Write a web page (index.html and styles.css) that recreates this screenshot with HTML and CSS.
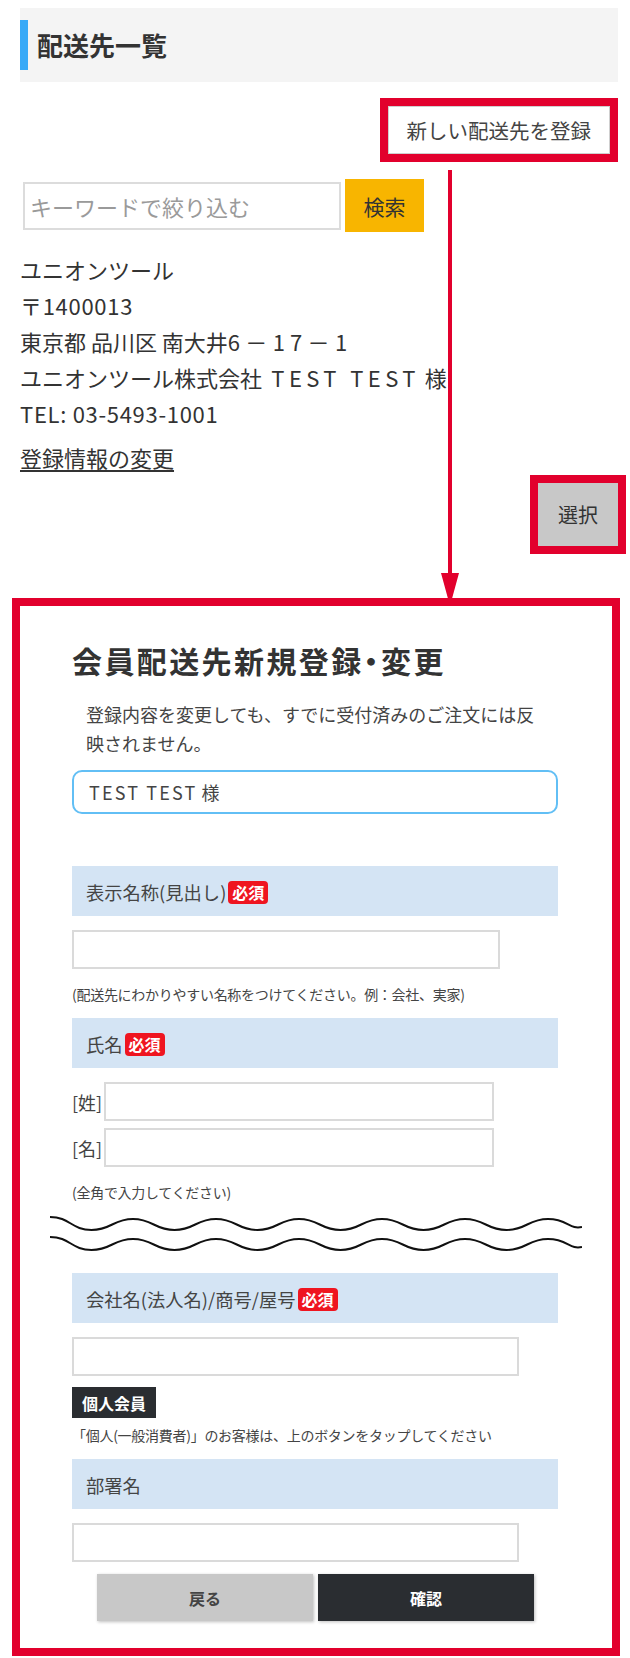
FILE: index.html
```html
<!DOCTYPE html>
<html lang="ja">
<head>
  <meta charset="UTF-8" />
  <meta name="viewport" content="width=device-width, initial-scale=1.0"/>
  <title>配送先一覧</title>
  <link rel="stylesheet" href="styles.css">
</head>
<body>
  <div class="page">
    <div class="page-head">
      <h1>配送先一覧</h1>
    </div>

    <div class="new-row">
      <div class="mark">
        <button class="new-btn">新しい配送先を登録</button>
      </div>
    </div>

    <form class="search">
      <input type="text" placeholder="キーワードで絞り込む">
      <button type="button">検索</button>
    </form>

    <div class="address">
      <p>ユニオンツール</p>
      <p class="digits">〒1400013</p>
      <p>東京都 品川区 南大井<span class="num">6－17－1</span></p>
      <p>ユニオンツール株式会社<span class="addr-latin"> TEST TEST</span> 様</p>
      <p class="digits">TEL: 03-5493-1001</p>
      <a href="#" class="edit-link">登録情報の変更</a>
    </div>

    <div class="select-row">
      <div class="mark">
        <button class="select-btn">選択</button>
      </div>
    </div>

    <!-- arrow from the new-address button down to the form -->
    <svg class="arrow" width="20" height="436" viewBox="0 0 20 436">
      <rect x="8" y="0" width="4" height="406" fill="#e2002d"/>
      <polygon points="1,403 19,403 10,436" fill="#e2002d"/>
    </svg>

    <div class="form-mark">
      <h2 class="form-title">会員配送先新規登録・変更</h2>
      <p class="lead">登録内容を変更しても、すでに受付済みのご注文には反映されません。</p>

      <div class="name-box"><span class="latin">TEST TEST</span> 様</div>

      <div class="field-head first">表示名称(見出し)<span class="req">必須</span></div>
      <input class="field w-md" type="text">
      <p class="note">(配送先にわかりやすい名称をつけてください。例：会社、実家)</p>

      <div class="field-head">氏名<span class="req">必須</span></div>
      <label class="name-row">[姓]<input class="field" type="text"></label>
      <label class="name-row">[名]<input class="field" type="text"></label>
      <p class="note">(全角で入力してください)</p>

      <svg class="cut" width="532" height="40" viewBox="0 0 532 40">
        <path d="M0 2 C20 2 21.5 15 41.5 15 S63 4 83 4 S104.5 15 124.5 15 S146 4 166 4 S187.5 15 207.5 15 S229 4 249 4 S270.5 15 290.5 15 S312 4 332 4 S353.5 15 373.5 15 S395 4 415 4 S436.5 15 456.5 15 S478 4 498 4 S519.5 15 532 12" fill="none" stroke="#111" stroke-width="2"/>
        <path d="M0 22 C20 22 21.5 35 41.5 35 S63 24 83 24 S104.5 35 124.5 35 S146 24 166 24 S187.5 35 207.5 35 S229 24 249 24 S270.5 35 290.5 35 S312 24 332 24 S353.5 35 373.5 35 S395 24 415 24 S436.5 35 456.5 35 S478 24 498 24 S519.5 35 532 32" fill="none" stroke="#111" stroke-width="2"/>
      </svg>

      <div class="field-head">会社名(法人名)/商号/屋号<span class="req">必須</span></div>
      <input class="field w-lg" type="text">
      <button type="button" class="personal-btn">個人会員</button>
      <p class="note small">「個人(一般消費者)」のお客様は、上のボタンをタップしてください</p>

      <div class="field-head">部署名</div>
      <input class="field w-lg" type="text">

      <div class="actions">
        <button type="button" class="btn-back">戻る</button>
        <button type="button" class="btn-confirm">確認</button>
      </div>
    </div>
  </div>
</body>
</html>
```

FILE: styles.css
```css
:root {
  --mark-red: #e2002d;
  --head-blue: #d4e4f4;
  --text-color: #333;
  --dark-btn: #2a2d31;
}

* {
  margin: 0;
  padding: 0;
  box-sizing: border-box;
}

body {
  font-family: "Noto Sans CJK JP", "Noto Sans", sans-serif;
  color: var(--text-color);
  background: #fff;
}

button, input {
  font-family: inherit;
}

.page {
  position: relative;
  width: 630px;
}

.page-head {
  margin: 8px 12px 0 20px;
  background: #f4f4f4;
  padding: 12px 0;
}

.page-head h1 {
  border-left: 8px solid #38a9f7;
  padding-left: 9px;
  font-size: 26px;
  line-height: 50px;
  font-weight: bold;
  color: #333;
}

.mark {
  border: 8px solid var(--mark-red);
}

.new-row {
  display: flex;
  justify-content: flex-end;
  margin: 16px 12px 0 0;
}

.new-btn {
  display: block;
  height: 48px;
  padding: 0 18px;
  background: #fff;
  border: 1px solid #cfcfcf;
  font-size: 20.5px;
  color: #444;
}

.search {
  display: flex;
  align-items: center;
  gap: 4px;
  margin: 17px 0 0 23px;
}

.search input {
  width: 318px;
  height: 48px;
  border: 2px solid #dcdcdc;
  padding: 0 5px;
  font-size: 22px;
  color: #333;
}

.search input::placeholder {
  color: #9a9a9a;
}

.search button {
  width: 79px;
  height: 53px;
  border: none;
  background: #f8b500;
  font-size: 21px;
  color: #333;
}

.address {
  margin: 19px 0 0 20px;
  font-size: 22px;
  line-height: 36px;
}

.digits {
  letter-spacing: 0.7px;
}

.num {
  letter-spacing: 0.24em;
}

.addr-latin {
  letter-spacing: 0.2em;
}

.latin {
  letter-spacing: 0.12em;
}

.edit-link {
  display: inline-block;
  margin-top: 8px;
  color: #333;
  text-decoration: underline;
  text-underline-offset: 3px;
}

.select-row {
  display: flex;
  justify-content: flex-end;
  margin-right: 4px;
}

.select-btn {
  display: block;
  width: 80px;
  height: 63px;
  border: none;
  background: #c8c8c8;
  font-size: 20px;
  color: #333;
}

.arrow {
  position: absolute;
  left: 440px;
  top: 162px;
}

.form-mark {
  margin: 44px 10px 0 12px;
  border: 8px solid var(--mark-red);
  padding: 33px 54px 27px 52px;
}

.form-title {
  font-size: 30px;
  line-height: 42px;
  letter-spacing: 2.4px;
  font-weight: bold;
  font-feature-settings: "palt";
  color: #333;
}

.lead {
  margin-top: 19px;
  padding: 0 14px;
  font-size: 18px;
  line-height: 29px;
  color: #444;
}

.name-box {
  margin-top: 12px;
  height: 44px;
  border: 2px solid #62bff5;
  border-radius: 10px;
  padding-left: 15px;
  font-size: 18px;
  line-height: 40px;
  color: #444;
}

.field-head {
  display: flex;
  align-items: center;
  height: 50px;
  margin-top: 14px;
  padding: 2px 0 0 14px;
  background: var(--head-blue);
  font-size: 18.3px;
  color: #444;
}

.field-head.first {
  margin-top: 52px;
}

.req {
  margin-left: 2px;
  padding: 0 4px;
  height: 23px;
  line-height: 23px;
  border-radius: 4px;
  background: #ef1520;
  color: #fff;
  font-size: 16px;
  font-weight: bold;
}

.field {
  display: block;
  height: 39px;
  border: 2px solid #dadada;
  background: #fff;
}

.w-md {
  width: 428px;
  margin-top: 14px;
}

.w-lg {
  width: 447px;
  margin-top: 14px;
}

.note {
  margin-top: 15px;
  font-size: 14px;
  line-height: 20px;
  letter-spacing: -0.02em;
  color: #444;
}

.note.small {
  margin-top: 7px;
}

.name-row {
  display: flex;
  align-items: center;
  gap: 2px;
  margin-top: 7px;
  font-size: 18px;
  color: #444;
}

.name-row:first-of-type {
  margin-top: 14px;
}

.name-row .field {
  width: 390px;
}

.cut {
  display: block;
  margin: 13px 0 0 -22px;
}

.cut + .field-head {
  margin-top: 18px;
}

.personal-btn {
  display: block;
  margin-top: 11px;
  width: 84px;
  height: 31px;
  border: none;
  background: var(--dark-btn);
  color: #fff;
  font-size: 16px;
  font-weight: bold;
}

.actions {
  display: flex;
  gap: 5px;
  margin: 12px 0 0 25px;
}

.actions button {
  width: 216px;
  height: 47px;
  border: none;
  font-size: 16px;
  font-weight: bold;
  box-shadow: 1px 1px 3px rgba(0, 0, 0, 0.25);
}

.btn-back {
  background: #c8c8c8;
  color: #444;
}

.btn-confirm {
  background: var(--dark-btn);
  color: #fff;
}
```
